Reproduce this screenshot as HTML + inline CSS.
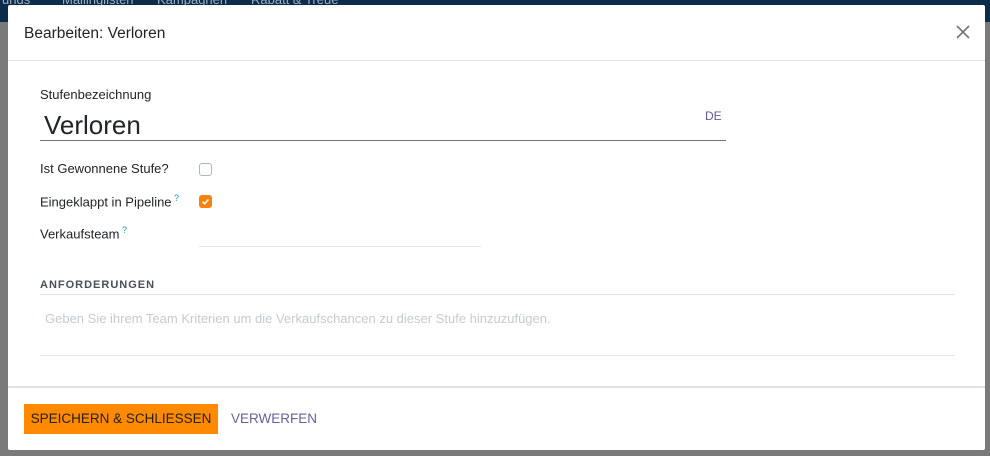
<!DOCTYPE html>
<html><head><style>
body{margin:0;width:990px;height:456px;background:#7a7a7a;font-family:"Liberation Sans",Arial,sans-serif;position:relative;overflow:hidden}
.top{position:absolute;left:0;top:0;width:990px;height:22px;background:#0d2b4b;color:#9fb0c4;font-size:13px}
.top span{position:absolute;top:-8px}
.m{position:absolute;left:8px;top:5px;width:977px;height:445px;background:#fff;border-radius:2px}
.abs{position:absolute}
</style></head><body>
<div class="top"><span style="left:2px">unds</span><span style="left:62px">Mailinglisten</span><span style="left:157px">Kampagnen</span><span style="left:251px">Rabatt &amp; Treue</span></div>
<div class="m">
<div class="abs" style="left:16px;top:20px;font-size:15.5px;color:#212529">Bearbeiten: Verloren</div>
<svg class="abs" style="left:948px;top:20px" width="14" height="14"><path d="M1 1L13 13M13 1L1 13" stroke="#777" stroke-width="1.6"/></svg>
<div class="abs" style="left:0;top:55px;width:977px;border-top:1px solid #dee2e6"></div>
<div class="abs" style="left:32px;top:82px;font-size:13px;color:#212529">Stufenbezeichnung</div>
<div class="abs" style="left:36px;top:105px;font-size:26px;color:#212529">Verloren</div>
<div class="abs" style="left:697px;top:104px;font-size:12px;color:#5f5aa5">DE</div>
<div class="abs" style="left:32px;top:135px;width:686px;border-top:1px solid #6c757d"></div>
<div class="abs" style="left:32px;top:156px;font-size:13px;color:#212529">Ist Gewonnene Stufe?</div>
<div class="abs" style="left:191px;top:158px;width:11px;height:11px;border:1px solid #adb5bd;border-radius:3px"></div>
<div class="abs" style="left:32px;top:188px;font-size:13px;color:#212529">Eingeklappt in Pipeline<sup style="color:#1f8fb8;font-size:9px"> ?</sup></div>
<div class="abs" style="left:191px;top:190px;width:13px;height:13px;background:#f7820c;border-radius:3px"><svg width="13" height="13"><path d="M3.5 6.8L5.6 8.7L9.5 4.5" stroke="#fff" stroke-width="1.6" fill="none"/></svg></div>
<div class="abs" style="left:32px;top:220px;font-size:13px;color:#212529">Verkaufsteam<sup style="color:#1f8fb8;font-size:9px"> ?</sup></div>
<div class="abs" style="left:191px;top:241px;width:282px;border-top:1px solid #e5e5e5"></div>
<div class="abs" style="left:32px;top:274px;font-size:11px;font-weight:bold;color:#495057;letter-spacing:1px">ANFORDERUNGEN</div>
<div class="abs" style="left:32px;top:289px;width:914px;border-top:1px solid #dee2e6"></div>
<div class="abs" style="left:37px;top:306px;font-size:13px;color:#c6cbd1">Geben Sie ihrem Team Kriterien um die Verkaufschancen zu dieser Stufe hinzuzufügen.</div>
<div class="abs" style="left:32px;top:350px;width:914px;border-top:1px solid #e5e5e5"></div>
<div class="abs" style="left:0;top:381px;width:977px;border-top:2px solid #dee2e6"></div>
<div class="abs" style="left:16px;top:399px;width:194px;height:30px;background:#ff8a00;color:#222;font-size:13.5px;line-height:30px;text-align:center">SPEICHERN &amp; SCHLIESSEN</div>
<div class="abs" style="left:223px;top:399px;height:30px;line-height:30px;font-size:13.5px;color:#6a5f9c">VERWERFEN</div>
</div>
</body></html>
